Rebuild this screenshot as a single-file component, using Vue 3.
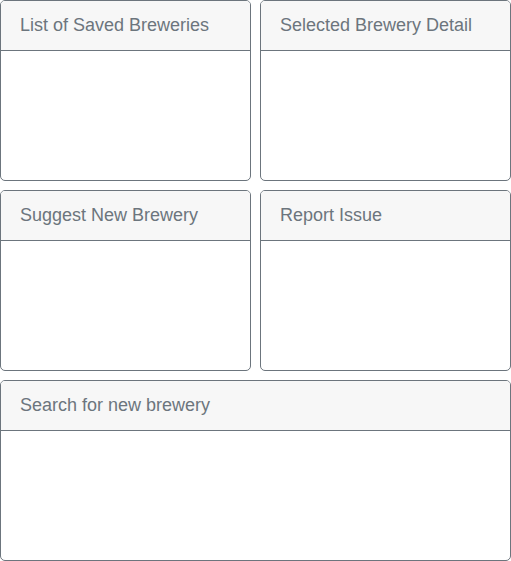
<script setup>
const panels = [
  { id: 'saved', title: 'List of Saved Breweries' },
  { id: 'detail', title: 'Selected Brewery Detail' },
  { id: 'suggest', title: 'Suggest New Brewery' },
  { id: 'report', title: 'Report Issue' },
  { id: 'search', title: 'Search for new brewery', wide: true },
]
</script>

<template>
  <main class="board">
    <section
      v-for="panel in panels"
      :key="panel.id"
      class="card"
      :class="{ wide: panel.wide }"
      :aria-labelledby="panel.id"
    >
      <h2 :id="panel.id" class="card-header">{{ panel.title }}</h2>
      <div class="card-body"></div>
    </section>
  </main>
</template>

<style>
body {
  margin: 0;
  background: #fff;
}
</style>

<style scoped>
.board {
  display: grid;
  grid-template-columns: repeat(2, minmax(0, 1fr));
  gap: 9px;
  font-family: "Liberation Sans", Arial, sans-serif;
  color: #6c757d;
}

.card {
  box-sizing: border-box;
  display: flex;
  flex-direction: column;
  min-height: 181px;
  overflow: hidden;
  border: 1px solid #6c757d;
  border-radius: 5px;
  background: #fff;
}

.wide {
  grid-column: 1 / -1;
}

.card-header {
  margin: 0;
  padding: 12px 19px;
  border-bottom: 1px solid #6c757d;
  background: #f7f7f7;
  font-size: 18px;
  font-weight: 400;
  line-height: 25px;
}

.card-body {
  flex: 1;
}
</style>
